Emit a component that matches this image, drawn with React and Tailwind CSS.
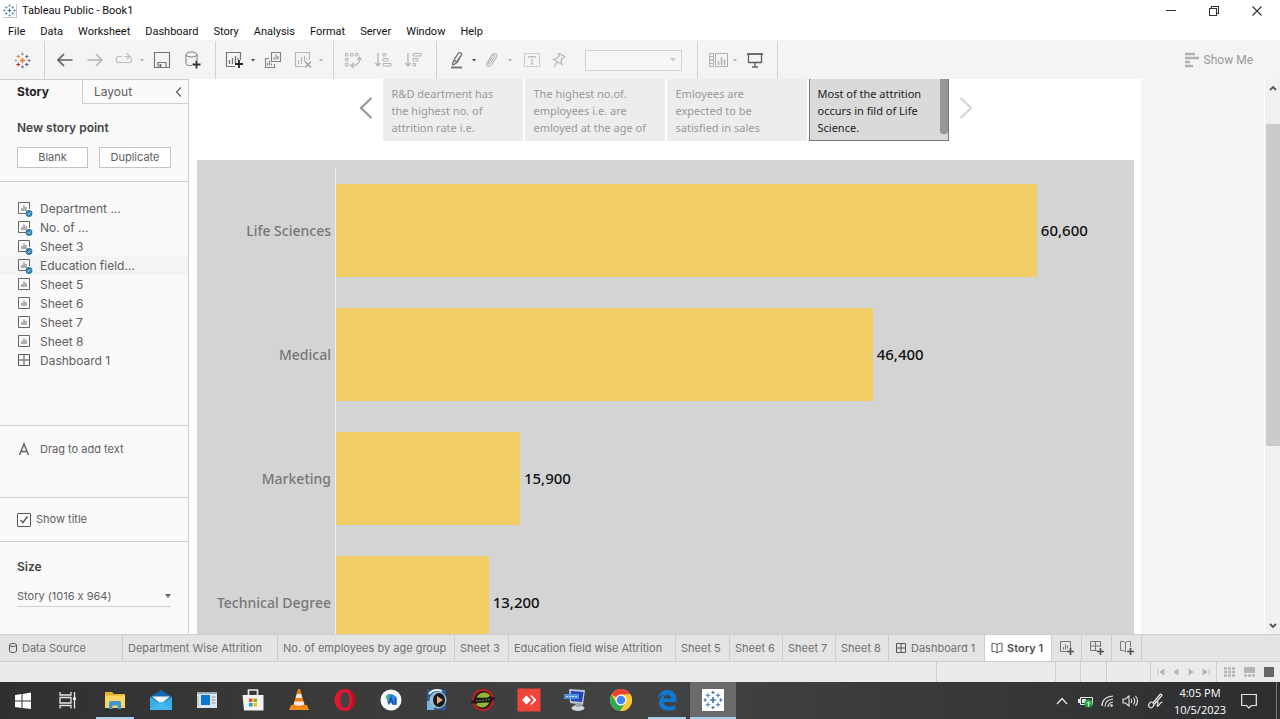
import React from "react";

const uiFont = "font-['Open_Sans','Noto_Sans',sans-serif]";
const menuFont = "font-['Roboto','Open_Sans',sans-serif]";
const bookFont = "font-['Inter','Liberation_Sans',sans-serif] [font-variant-ligatures:none]";

function Svg({ w = 18, h = 18, className = "", children }) {
  return (
    <svg width={w} height={h} viewBox={`0 0 ${w} ${h}`} fill="none" stroke="currentColor" className={`shrink-0 ${className}`} aria-hidden="true">
      {children}
    </svg>
  );
}

function Cross({ x, y, r, c, sw = 1.2 }) {
  return <path d={`M${x - r} ${y}H${x + r}M${x} ${y - r}V${y + r}`} stroke={c} strokeWidth={sw} />;
}

function TableauMark({ blue = false, size = 18 }) {
  const c = blue
    ? ["#3c7ab8", "#5d95c9", "#5d95c9", "#5d95c9", "#5d95c9", "#3f6f9f", "#3f6f9f", "#3f6f9f", "#3f6f9f"]
    : ["#e8762c", "#eb9129", "#59879b", "#c72037", "#5b6591", "#7199a6", "#5b6591", "#5b6591", "#c9a0a0"];
  return (
    <svg width={size} height={size} viewBox="0 0 18 18" fill="none" aria-hidden="true">
      <Cross x={9} y={9} r={2.6} c={c[0]} sw={1.5} />
      <Cross x={4.5} y={4.8} r={1.9} c={c[1]} />
      <Cross x={13.5} y={4.8} r={1.9} c={c[2]} />
      <Cross x={4.5} y={13.2} r={1.9} c={c[3]} />
      <Cross x={13.5} y={13.2} r={1.9} c={c[4]} />
      <Cross x={9} y={2.2} r={1.5} c={c[5]} sw={1} />
      <Cross x={9} y={15.8} r={1.5} c={c[6]} sw={1} />
      <Cross x={2} y={9} r={1.5} c={c[8]} sw={1} />
      <Cross x={16} y={9} r={1.5} c={c[7]} sw={1} />
    </svg>
  );
}

function Tool({ label, className = "w-[30px]", children }) {
  return (
    <button type="button" aria-label={label} className={`flex h-full shrink-0 items-center justify-center ${className}`}>
      {children}
    </button>
  );
}

function Caret({ dark }) {
  return (
    <button type="button" aria-label="More options" className={`flex h-full w-[8px] shrink-0 items-center justify-center ${dark ? "text-[#444]" : "text-[#b0b0b0]"}`}>
      <svg width="4" height="3" viewBox="0 0 4 3" fill="currentColor"><path d="M0 0H4L2 2.600Z" /></svg>
    </button>
  );
}

function Group({ className = "", children }) {
  return <div className={`flex shrink-0 items-center border-r border-[#d2d2d2] ${className}`}>{children}</div>;
}

function Toolbar() {
  return (
    <div className="flex h-[39px] shrink-0 items-stretch bg-[#f4f4f4] pt-px">
      <Group className="w-[45px] justify-center"><Tool label="Start page"><TableauMark size={17} /></Tool></Group>
      <Group className="w-[171px] pl-[5px]">
        <Tool label="Back"><Svg className="text-[#606060]"><path d="M16.500 9H2.500M8 3L2 9L8 15" strokeWidth="1.700" /></Svg></Tool>
        <Tool label="Forward"><Svg className="text-[#b0b0b0]"><path d="M1.500 9H15.500M10 3L16 9L10 15" strokeWidth="1.400" /></Svg></Tool>
        <Tool label="Redo" className="w-[28px]"><Svg className="text-[#bdbdbd]"><path d="M7 5.500H4A2 2 0 0 0 1.500 7.500V9.500A2 2 0 0 0 4 11.500H14A2 2 0 0 0 16.500 9.500V7.500A2 2 0 0 0 14 5.500H9.500M12 2.500L14.500 5.500L12 8.500" strokeWidth="1.200" /></Svg></Tool>
        <Caret />
        <Tool label="Save" className="w-[32px]"><Svg className="text-[#777]"><path d="M1.500 1.500H16.500V16.500H1.500ZM5 16V11.500H13V16" strokeWidth="1.200" /><path d="M6.500 13H8.500V16H6.500Z" fill="currentColor" stroke="none" /></Svg></Tool>
        <Tool label="New data source"><Svg className="text-[#777]"><ellipse cx="7.500" cy="3.500" rx="5.500" ry="2.500" /><path d="M2 3.500V12.500C2 14 5 14.800 8 14.500M13 3.500V9" /><path d="M12.500 9.500V17.500M8.500 13.500H16.500" stroke="#333" strokeWidth="1.800" /></Svg></Tool>
      </Group>
      <Group className="w-[118px] pl-[3px]">
        <Tool label="New worksheet"><Svg className="text-[#777]"><path d="M10 15.500H1.500V1.500H15.500V9" strokeWidth="1.200" /><path d="M4.500 13V9M7.500 13V7M10.500 12V5M13 9V7" strokeWidth="1.300" /><path d="M14 9V17M10 13H18" stroke="#222" strokeWidth="1.800" /></Svg></Tool>
        <Caret dark />
        <Tool label="Duplicate sheet" className="w-[32px]"><Svg className="text-[#808080]"><path d="M7.500 1.500H16.500V10.500H7.500ZM5 7.500H1.500V16.500H10.500V13M10 8.500V6.500M12 8.500V3.500M14 8.500V5M3.500 14.500V12M5.500 14.500V10M7.500 14.500V12.500" strokeWidth="1.100" /></Svg></Tool>
        <Tool label="Clear sheet" className="w-[28px]"><Svg className="text-[#b5b5b5]"><path d="M9.500 15.500H1.500V1.500H15.500V9M4.500 13V9M7.500 13V6M10.500 10.500V5M13 8.500V7" strokeWidth="1.200" /><path d="M11 10.500L17 16.500M17 10.500L11 16.500" stroke="#a0a0a0" strokeWidth="1.500" /></Svg></Tool>
        <Caret />
      </Group>
      <Group className="w-[103px] pl-1 text-[#b5b5b5]">
        <Tool label="Swap rows and columns"><Svg><path d="M1.500 2.500H4V5H1.500ZM6.500 2.500H9V5H6.500ZM11.500 2.500H14V5H11.500ZM1.500 7.500H4V10H1.500ZM1.500 12.500H4V15H1.500Z" /><path d="M15.500 7C16.500 12 12 15 7.500 14.500M10 12L7 14.500L10 17M13 9L15.500 6.500L17.500 9" strokeWidth="1.300" /></Svg></Tool>
        <Tool label="Sort ascending"><Svg><path d="M4 2V15M1.500 12L4 15L6.500 12" strokeWidth="1.300" /><path d="M9 2.500H11.500V5H9ZM9 7.500H14V10H9ZM9 12.500H17V15H9Z" /></Svg></Tool>
        <Tool label="Sort descending"><Svg><path d="M4 2V15M1.500 12L4 15L6.500 12" strokeWidth="1.300" /><path d="M9 2.500H17V5H9ZM9 7.500H14V10H9ZM9 12.500H11.500V15H9Z" /></Svg></Tool>
      </Group>
      <Group className="w-[261px] pl-[7px]">
        <Tool label="Highlight" className="w-[26px]"><Svg className="text-[#707070]"><path d="M4.500 13L6 9L10.500 2C11.500 1 14.500 2 13.500 4L9 11.500L5 14Z M6 9L9 11.500M12.500 5L9 10" strokeWidth="1.300" /><path d="M3 16.500H14" strokeWidth="1.800" /></Svg></Tool>
        <Caret dark />
        <Tool label="Group members" className="w-[28px]"><Svg className="text-[#b8b8b8]"><path d="M5 10L9 4C11 1 15 3 13.500 6L8.500 14C6.500 17 2 15 4 11.500L8.500 5C10 3 12.500 4.500 11.500 6L7 12.500C6 14 4.500 13 5.500 11.500L9.500 6" strokeWidth="1.100" /></Svg></Tool>
        <Caret />
        <Tool label="Show mark labels" className="w-[36px]"><Svg className="text-[#b8b8b8]"><path d="M1.500 2.500H16.500V15.500H1.500Z" strokeDasharray="2 1" /><path d="M5.500 7V5.500H12.500V7M9 5.500V13M7.500 13H10.500" /></Svg></Tool>
        <Tool label="Fix axes" className="w-[20px]"><Svg className="text-[#b8b8b8]"><path d="M7.500 2.500L14 5.500L12.500 7H11L10 10.500L11 13.500L2.500 8.500L5.500 7.500L8 5ZM6 11L3 16" strokeWidth="1.200" /></Svg></Tool>
        <select aria-label="Fit" disabled className="ml-[15px] h-[21px] w-[97px] shrink-0 appearance-none border border-[#d4d4d4] bg-[#f6f6f6]"><option></option></select>
        <svg width="6" height="4" viewBox="0 0 6 4" fill="#c8c8c8" className="-ml-[12px] shrink-0"><path d="M0 0H6L3 3.500Z" /></svg>
      </Group>
      <Group className="w-[80px] pl-[7px]">
        <Tool label="Show or hide cards" className="w-[26px]"><Svg w={20} className="text-[#b0b0b0]"><path d="M7.500 2.500H19.500V15.500H7.500ZM1.500 2.500H5.500V5.500H1.500ZM1.500 5.500H5.500V9H1.500ZM1.500 9H5.500V12.500H1.500ZM1.500 12.500H5.500V15.500H1.500Z" /><path d="M10.500 14V10M13.500 14V6M16.500 14V8.500" strokeWidth="1.500" /></Svg></Tool>
        <Caret />
        <Tool label="Presentation mode" className="w-[32px]"><Svg className="text-[#606060]"><path d="M1 3H17" strokeWidth="1.800" /><path d="M2.500 3V11.500H15.500V3M9 11.500V16M6 16H12" strokeWidth="1.300" /></Svg></Tool>
      </Group>
      <button type="button" className="ml-auto mr-[27px] flex items-center gap-[5px] font-['Roboto',sans-serif] text-[12px] text-[#999]">
        <Svg w={14} h={16} className="text-[#b0b0b0]"><path d="M0 2H10M0 6H14M0 10H5M0 14H8" strokeWidth="2.400" /></Svg>
        Show Me
      </button>
    </div>
  );
}

function TitleBar() {
  return (
    <header className={`shrink-0 bg-white text-[#111] ${menuFont}`}>
      <div className="flex h-[21px] items-center">
        <span className="ml-[3px] flex size-[14px] items-center justify-center border-r border-b border-[#c5c5c5]"><TableauMark blue size={13} /></span>
        <h1 className="ml-[5px] pt-[2px] text-[11px]">Tableau Public - Book1</h1>
        <div className="ml-auto mr-[2px] flex text-[#333]">
          <button type="button" aria-label="Minimize" className="flex h-5 w-[43px] items-center justify-center"><Svg w={10} h={10}><path d="M0 4.500H10" /></Svg></button>
          <button type="button" aria-label="Restore" className="flex h-5 w-[43px] items-center justify-center"><Svg w={10} h={10}><path d="M.5 2.500H7.500V9.500H.5ZM2.500 2.500V.5H9.500V7.500H7.500" strokeWidth="1.100" /></Svg></button>
          <button type="button" aria-label="Close" className="flex h-5 w-[43px] items-center justify-center"><Svg w={10} h={10}><path d="M.5 .5L9.500 9.500M9.500 .5L.5 9.500" strokeWidth="1.100" /></Svg></button>
        </div>
      </div>
      <nav className="flex h-[19px] items-center gap-px px-px pt-[3px] text-[11px]">
        {["File", "Data", "Worksheet", "Dashboard", "Story", "Analysis", "Format", "Server", "Window", "Help"].map((m) => (
          <button type="button" key={m} className="px-[7px]">{m}</button>
        ))}
      </nav>
    </header>
  );
}

function SheetIcon({ used }) {
  return (
    <Svg w={16} h={16} className="text-[#666]">
      <path d={used ? "M9 12.500H1.500V1.500H12.500V8" : "M1.500 1.500H12.500V12.500H1.500Z"} />
      <path d="M5 10V7M7 10V4.500M9 10V6" strokeWidth="1.300" stroke="#888" />
      {used && <g><circle cx="12" cy="12.500" r="3.400" fill="#2f7fa6" stroke="none" /><path d="M10.500 12.500L11.600 13.600L13.500 11.400" stroke="#cfe5ef" /></g>}
    </Svg>
  );
}

function GridIcon() {
  return <Svg w={16} h={16} className="text-[#555]"><path d="M1.500 1.500H12.500V12.500H1.500ZM7 1.500V12.500M1.500 7H12.500" /></Svg>;
}

const sheets = [
  ["Department ...", true], ["No. of ...", true], ["Sheet 3", true], ["Education field...", true],
  ["Sheet 5"], ["Sheet 6"], ["Sheet 7"], ["Sheet 8"], ["Dashboard 1"],
];

function Sidebar() {
  return (
    <aside className={`flex w-[189px] shrink-0 flex-col border-t border-r border-[#cfcfcf] bg-[#fafafa] text-[12px] text-[#606060] ${bookFont}`}>
      <div className="border-b border-[#cfcfcf] pb-[13px]">
        <div className="flex h-[24px]">
          <button type="button" className="w-[82px] pr-4 text-[12px] font-bold text-[#222]">Story</button>
          <div className="flex flex-1 items-center justify-between border-b border-l border-[#cfcfcf] pr-[6px] pl-[11px]">
            <button type="button">Layout</button>
            <button type="button" aria-label="Collapse pane"><Svg w={7} h={10}><path d="M6 .5L1.500 5L6 9.500" strokeWidth="1.300" /></Svg></button>
          </div>
        </div>
        <h2 className="mt-[16px] ml-[17px] leading-4 font-semibold text-[#444]">New story point</h2>
        <div className="mt-[11px] ml-[17px] flex gap-[11px] text-[11px]">
          <button type="button" className="h-[21px] w-[71px] border border-[#c4c4c4] bg-white">Blank</button>
          <button type="button" className="h-[21px] w-[72px] border border-[#c4c4c4] bg-white">Duplicate</button>
        </div>
      </div>
      <ul className="flex-1 border-b border-[#cfcfcf] pt-[17px]">
        {sheets.map(([name, used], i) => (
          <li key={name} className={i === 3 ? "bg-[#f4f4f4]" : ""}>
            <button type="button" className="flex h-[19px] w-full items-center gap-[7px] pl-[17px]">
              {name === "Dashboard 1" ? <GridIcon /> : <SheetIcon used={used} />}
              {name}
            </button>
          </li>
        ))}
      </ul>
      <div className="flex h-[72px] shrink-0 items-start gap-[10px] border-b border-[#cfcfcf] pt-[15px] pl-[18px] text-[11px] leading-4">
        <Svg w={12} h={16} className="text-[#666]"><path d="M1.500 14L6 3L10.500 14M3 10.500H9" strokeWidth="1.500" /></Svg>
        Drag to add text
      </div>
      <div className="flex h-[44px] shrink-0 items-center border-b border-[#cfcfcf] pl-[17px] text-[11px]">
        <label className="flex items-center">
          <input type="checkbox" defaultChecked className="peer size-[14px] appearance-none rounded-[1px] border border-[#555] bg-white" />
          <Svg w={14} h={14} className="-ml-[14px] opacity-0 peer-checked:opacity-100"><path d="M3.500 7L6 9.500L10.500 3.500" strokeWidth="1.500" /></Svg>
          <span className="ml-[5px]">Show title</span>
        </label>
      </div>
      <div className="h-[92px] shrink-0 pt-[17px] pr-[17px] pl-[17px] text-[11px]">
        <label htmlFor="size" className="block text-[12px] leading-4 font-semibold text-[#444]">Size</label>
        <div className="mt-[11px] flex h-[21px] items-center border-b border-[#cfcfcf]">
          <select id="size" className="w-full appearance-none bg-transparent"><option>Story (1016 x 964)</option></select>
          <svg width="6" height="4" viewBox="0 0 6 4" fill="#666" className="-ml-[6px] shrink-0"><path d="M0 0H6L3 4Z" /></svg>
        </div>
      </div>
    </aside>
  );
}

const points = [
  ["R&D deartment has", "the highest no. of", "attrition rate i.e."],
  ["The highest no.of.", "employees i.e. are", "emloyed at the age of"],
  ["Emloyees are", "expected to be", "satisfied in sales"],
  ["Most of the attrition", "occurs in fild of Life", "Science."],
];

const bars = [["Life Sciences", 60600], ["Medical", 46400], ["Marketing", 15900], ["Technical Degree", 13200]];
const axisMax = 69000;

function Story() {
  return (
    <main className="flex min-w-0 flex-1 flex-col overflow-hidden bg-white pr-[7px] pl-[8px] font-['Noto_Sans','Open_Sans',sans-serif]">
      <div className="flex h-[81px] shrink-0 items-start justify-center">
        <button type="button" aria-label="Previous story point" className="mt-[18px] mr-[9px] text-[#999]"><Svg w={16} h={22}><path d="M13.500 1L3 11L13.500 21" strokeWidth="2.200" /></Svg></button>
        <div className="flex gap-[2px]">
          {points.map((lines, i) => (
            <button
              type="button"
              key={i}
              className={`flex h-[62px] w-[140px] justify-between overflow-hidden text-left text-[11px] leading-[17px] ${i === 3 ? "border border-t-0 border-[#777] bg-[#dadada] pl-[8px] text-[#222]" : "bg-[#ededed] pl-[9px] text-[#999]"}`}
            >
              <span className="pt-[6px] whitespace-nowrap">{lines.map((l) => <span key={l} className="block h-[17px]">{l}</span>)}</span>
              {i === 3 && <span className="h-[55px] w-[8px] rounded-b-[3px] bg-[#979797]" />}
            </button>
          ))}
        </div>
        <button type="button" aria-label="Next story point" className="mt-[18px] ml-[9px] text-[#d4d4d4]"><Svg w={16} h={22}><path d="M2.500 1L13 11L2.500 21" strokeWidth="2.200" /></Svg></button>
      </div>
      <div className="min-h-0 flex-1 overflow-hidden bg-[#d4d4d4] pt-[8px]">
        <div className="grid h-[600px] grid-cols-[139px_1fr]">
          <div className="flex flex-col gap-[31px] border-r border-[#f0f0f0] pt-[16px] pr-[4px] text-right text-[14px] font-medium text-[#777]">
            {bars.map(([n]) => <div key={n} className="flex h-[93px] shrink-0 items-center justify-end">{n}</div>)}
          </div>
          <div className="flex flex-col gap-[31px] pt-[16px] text-[15px] font-medium text-[#111]">
            {bars.map(([n, v]) => (
              <div key={n} className="flex h-[93px] shrink-0 items-center gap-[4px]">
                <div className="h-full bg-[#f0ce63]" style={{ width: `${(v / axisMax) * 100}%` }} />
                {v.toLocaleString("en-US")}
              </div>
            ))}
          </div>
        </div>
      </div>
    </main>
  );
}

function ScrollRail() {
  return (
    <div className="flex w-[16px] shrink-0 flex-col items-center border-l border-white bg-[#f1f1f1] text-[#555]">
      <button type="button" aria-label="Scroll up" className="flex h-[17px] items-center"><Svg w={8} h={6}><path d="M1 5L4 2L7 5" strokeWidth="1.800" /></Svg></button>
      <div className="mt-[28px] h-[322px] w-[14px] bg-[#cbcbcb]" />
      <button type="button" aria-label="Scroll down" className="mt-auto flex h-[17px] items-center"><Svg w={8} h={6}><path d="M1 1L4 4L7 1" strokeWidth="1.800" /></Svg></button>
    </div>
  );
}

function BookIcon() {
  return <Svg w={12} h={12} className="text-[#555]"><path d="M6 2.500C4.500 1.500 3 1.200 1 1.500V9.500C3 9.200 4.500 9.700 6 11C7.500 9.700 9 9.200 11 9.500V1.500C9 1.200 7.500 1.500 6 2.500ZM6 2.500V11" /></Svg>;
}

function TabGrid() {
  return <Svg w={12} h={12} className="text-[#555]"><path d="M1.500 1.500H10.500V10.500H1.500ZM6 1.500V10.500M1.500 6H10.500" /></Svg>;
}

const tabs = [
  ["Data Source", "w-[123px] pl-[8px]"], ["Department Wise Attrition", "w-[155px] pl-[5px]"], ["No. of employees by age group", "w-[177px] pl-[5px]"],
  ["Sheet 3", "w-[54px] pl-[5px]"], ["Education field wise Attrition", "w-[167px] pl-[5px]"], ["Sheet 5", "w-[54px] pl-[5px]"],
  ["Sheet 6", "w-[53px] pl-[5px]"], ["Sheet 7", "w-[53px] pl-[5px]"], ["Sheet 8", "w-[53px] pl-[5px]"], ["Dashboard 1", "w-[96px] pl-[6px]"],
  ["Story 1", "w-[67px] pl-[6px]"],
];

function SheetTabs() {
  return (
    <div className={`flex h-[28px] shrink-0 border-t border-b border-[#cdcdcd] bg-[#e4e4e4] text-[11px] text-[#707070] ${bookFont}`}>
      {tabs.map(([t, w]) => (
        <button type="button" key={t} className={`flex shrink-0 items-center gap-[4px] border-r border-[#cdcdcd] whitespace-nowrap ${w} ${t === "Story 1" ? "bg-white font-semibold text-[#505050]" : ""}`}>
          {t === "Data Source" && <Svg w={10} h={12} className="text-[#555]"><path d="M1.500 3C1.500 1 8.500 1 8.500 3V9C8.500 11 1.500 11 1.500 9ZM1.500 3C1.500 5 8.500 5 8.500 3" /></Svg>}
          {t === "Dashboard 1" && <TabGrid />}
          {t === "Story 1" && <BookIcon />}
          {t}
        </button>
      ))}
      {["New worksheet", "New dashboard", "New story"].map((n, i) => (
        <button type="button" aria-label={n} key={n} className="flex w-[30px] shrink-0 items-center justify-center border-r border-[#cdcdcd]">
          <Svg w={16} h={16} className="text-[#777]">
            {i === 0 && <path d="M8 11.500H1.500V1.500H11.500V8M4.500 9.500V7M6.500 9.500V4.500M8.500 8.500V5.500" />}
            {i === 1 && <path d="M8 10.500H1.500V1.500H11.500V7M6.500 1.500V10.500M1.500 6H11.500" />}
            {i === 2 && <path d="M6.500 2.500C5 1.500 3.500 1.200 1.500 1.500V10.500C3.500 10.200 5 10.500 6.500 12M6.500 2.500C8 1.500 9.500 1.200 11.500 1.500V7M6.500 2.500V12" />}
            <path d="M11.500 8V15M8 11.500H15" strokeWidth="1.700" stroke="#505050" />
          </Svg>
        </button>
      ))}
    </div>
  );
}

function StatusBar() {
  return (
    <div className="flex h-[20px] shrink-0 items-stretch justify-end bg-[#ebebeb] text-[#b5b5b5]">
      <div className="w-[119px] border-l border-[#cfcfcf]" />
      <div className="w-[25px] border-l border-[#cfcfcf]" />
      <div className="w-[26px] border-l border-[#cfcfcf]" />
      <div className="w-[44px] border-l border-[#cfcfcf]" />
      <div className="flex w-[66px] items-center justify-center gap-[7px] border-l border-[#cfcfcf]">
        {["M1 1V7M7 1L3 4L7 7Z", "M6 1L2 4L6 7Z", "M2 1L6 4L2 7Z", "M7 1V7M1 1L5 4L1 7Z"].map((d) => (
          <button type="button" aria-label="Sheet navigation" key={d}><Svg w={8} h={8}><path d={d} fill="currentColor" strokeWidth=".8" /></Svg></button>
        ))}
      </div>
      <div className="flex w-[64px] items-center justify-center gap-[9px] border-l border-[#cfcfcf]">
        <button type="button" aria-label="Sheet sorter"><Svg w={11} h={10}><path d="M0 1.500H11M0 5H11M0 8.500H11" strokeWidth="2.400" strokeDasharray="3 1" /></Svg></button>
        <button type="button" aria-label="Filmstrip"><Svg w={11} h={10}><path d="M0 3H11" strokeWidth="6" /><path d="M0 8.500H11" strokeWidth="2.400" strokeDasharray="3 1" /></Svg></button>
        <button type="button" aria-label="Show tabs" className="size-[10px] bg-[#666]" />
      </div>
    </div>
  );
}

const apps = [
  ["Start", <path d="M4 7L10.500 6V12.500H4ZM11.500 6L20 4.500V12.500H11.500ZM4 13.500H10.500V20L4 19ZM11.500 13.500H20V21L11.500 20Z" fill="#fff" />],
  ["Task View", <g stroke="#e6e6e6" fill="none" strokeWidth="1.300"><path d="M3 4V7H14V4M3 20.500V17.500H14V20.500M3 9.500H14V15H3ZM17.500 4V20.500" /><path d="M16 9.500H19V12H16Z" fill="#e6e6e6" stroke="none" /></g>],
  ["File Explorer", <g><path d="M2 4H9L11 6H22V20H2Z" fill="#e8b02f" /><path d="M2 7.500H22V20H2Z" fill="#fbd565" /><path d="M6 21V14.500Q6 13 8 13H16Q18 13 18 14.500V21H14.500V17.500H9.500V21Z" fill="#4094d0" /></g>],
  ["Mail", <g><path d="M1 9L12 2L23 9V12H1Z" fill="#1268b3" /><path d="M3 8.500H21L12 16Z" fill="#f4f8fb" /><path d="M1 9L12 15.500L1 22ZM23 9L12 15.500L23 22Z" fill="#33aee8" /><path d="M1 22V21L12 13.500L23 21V22Z" fill="#45b8ed" /></g>],
  ["Reader", <g><path d="M2 4H22V20H2Z" fill="#dfe6ec" /><path d="M2 4H22V6H2Z" fill="#9daab5" /><path d="M6 7H15V17H6Z" fill="#0878d4" /><path d="M16.500 9H20.500M16.500 12H20.500M16.500 15H20.500" stroke="#8898a5" /><path d="M3 8V18" stroke="#a9b5be" /></g>],
  ["Microsoft Store", <g><path d="M7.500 7V2H16.500V7" fill="none" stroke="#e9e9e9" strokeWidth="1.700" /><path d="M1.500 7H22.500V22.500H3Z" fill="#f2f2f2" /><path d="M8 10.500H11.500V14H8Z" fill="#f25022" /><path d="M12.500 10.500H16V14H12.500Z" fill="#7fba00" /><path d="M8 15H11.500V18.500H8Z" fill="#00a4ef" /><path d="M12.500 15H16V18.500H12.500Z" fill="#ffb900" /></g>],
  ["VLC", <g><path d="M4 17H20L22 22H2Z" fill="#f48b12" /><path d="M11 1H13L18 18Q12 21 6 18Z" fill="#f57f0b" /><path d="M9.800 6H14.200L15.300 10H8.700ZM7.500 13.500H16.500L17.300 16.500Q12 19 6.700 16.500Z" fill="#eee" /></g>],
  ["Opera", <g><ellipse cx="12" cy="12" rx="10.500" ry="11" fill="#e5162d" /><path d="M15 1.500Q23 4 22.500 12Q23 20 15 22.500Q19 18 19 12T15 1.500Z" fill="#a70e20" opacity=".7" /><ellipse cx="12" cy="12" rx="4.700" ry="8" fill="#424242" /></g>],
  ["Android Studio", <g><circle cx="12" cy="12" r="10.500" fill="#f8f8f8" /><path d="M7 8Q10 5 14 6.500L17.500 9V17H14L12 15L9 15.500Z" fill="#2f83ec" /><path d="M6.500 9Q8 5.500 11 6L9 13Z" fill="#3bc17e" /><path d="M9.500 16.500L12 10L14.500 16.500M16.700 10V16.500" stroke="#164f94" strokeWidth="1.400" fill="none" /></g>],
  ["Media Player", <g><path d="M2 1.500H21V22H2Z" fill="#315a93" /><path d="M2 13H9V22H2Z" fill="#70b6dd" /><circle cx="13" cy="12" r="8.500" fill="#9dbdd2" /><ellipse cx="14" cy="12" rx="6" ry="7" fill="#17191e" /><path d="M12 8L18 12L12 16Z" fill="#e3ad75" /><path d="M4 6Q9 0 17 3" stroke="#e4f3fc" strokeWidth="2" fill="none" /></g>],
  ["Game Booster", <g><circle cx="12" cy="12" r="10" fill="#142015" stroke="#c71924" strokeWidth="2.200" /><path d="M5.500 9.500Q11 1 19 7L17 10Z" fill="#91b733" /><path d="M18.500 14.500Q13 23 5 17L7 14Z" fill="#91b733" /><path d="M0 13.500L5 10.500L24 9V11L19 14L0 15.500Z" fill="#171717" /><path d="M5 13L19 11.500" stroke="#7f9150" strokeDasharray="2 1" /></g>],
  ["AnyDesk", <g><path d="M.5 .5H23.500V23.500H.5Z" fill="#ef443b" /><path d="M5 12L9.500 7.500L14 12L9.500 16.500Z" fill="#fff" /><path d="M13 7.500H15L19.500 12L15 16.500H13L17 12Z" fill="#fff" /></g>],
  ["Remote Desktop", <g><path d="M6 1L22 2L20 17L7 15Z" fill="#b8c5d4" /><path d="M8 3L20.500 4L19 14L8 13Z" fill="#2542b8" /><path d="M1 6H16V11H1Z" fill="#4d94df" /><path d="M3 8.500H14" stroke="#d2e7fb" strokeDasharray="2 1" /><ellipse cx="15" cy="20" rx="6.500" ry="3" fill="#cdd4da" /><path d="M12 15H18L17 19H13Z" fill="#9ca8b2" /></g>],
  ["Chrome", <g><circle cx="12" cy="12" r="11" fill="#fcc934" /><path d="M12 12L2.500 6.500A11 11 0 0 1 21.500 6.500H12Z" fill="#ea4335" /><path d="M2.500 6.500A11 11 0 0 0 11 23L16.800 14.700L12 12L7.300 14.700Z" fill="#34a853" /><path d="M12 6.500H21.500A11 11 0 0 1 11 23L16.800 14.700Z" fill="#fcc934" /><circle cx="12" cy="12" r="5.500" fill="#fff" /><circle cx="12" cy="12" r="4.300" fill="#4285f4" /></g>],
  ["Edge", <path d="M3 10.500C4 4.500 7.500 2 12 2C18 2 21.500 6 21.500 11V14H8.500C8.800 17 11.500 18.500 14.500 18.500C16.700 18.500 18.600 18 20.300 17V21C18.400 22 16 22.500 13.500 22.500C7.500 22.500 4 19 4 14.500C4 11 6 8.500 9 7C6 7.500 4.200 8.800 3 10.500ZM8.700 10.500H16C16 8 14.700 6.800 12.600 6.800S8.900 8.200 8.700 10.500Z" fill="#0f78d0" fillRule="evenodd" />],
  ["Tableau", null],
];

function Taskbar() {
  return (
    <footer className={`flex h-[37px] shrink-0 bg-linear-to-r from-[#303030] via-[#434343] to-[#2c2e30] text-white ${uiFont}`}>
      {apps.map(([name, art], i) => (
        <button type="button" aria-label={name} key={name} className={`flex w-[46px] shrink-0 flex-col items-center pt-[6px] ${i === 15 ? "bg-[#6a6a6a]" : ""}`}>
          {art ? <svg width="24" height="24" viewBox="0 0 24 24">{art}</svg> : <span className="mt-px flex size-[22px] items-center justify-center bg-white"><TableauMark blue size={20} /></span>}
          {(i === 2 || i >= 14) && <span className={`mt-auto h-[2px] bg-[#9cd3f3] ${i === 15 ? "w-full" : "w-[38px]"}`} />}
        </button>
      ))}
      <div className="ml-auto flex items-center text-[#e8e8e8]">
        <button type="button" aria-label="Show hidden icons" className="w-[22px]"><Svg w={12} h={8}><path d="M1 7L6 1.500L11 7" strokeWidth="1.300" /></Svg></button>
        <button type="button" aria-label="Battery" className="w-[23px]"><Svg w={17} h={14}><path d="M2.500 3.500H14.500V10.500H2.500Z" /><path d="M4 5H8V9H4ZM0 5H2V9H0Z" fill="currentColor" stroke="none" /><circle cx="10.500" cy="9.500" r="4" fill="#22a447" stroke="none" /><path d="M10.500 12.500V8.500M8.800 9.500L10.500 7.700L12.200 9.500" stroke="#d8f4df" /></Svg></button>
        <button type="button" aria-label="Wireless" className="w-[21px]"><Svg w={14} h={14}><path d="M1 12Q1 3 12 2M4 12.500Q4 6 12 5M7 13Q7 9 12 8" strokeWidth="1.200" /><circle cx="10.500" cy="11.500" r="1.300" fill="currentColor" stroke="none" /></Svg></button>
        <button type="button" aria-label="Volume" className="w-[26px]"><Svg w={17} h={14}><path d="M1 5H3.500L7 2V12L3.500 9H1ZM9 5Q10.500 7 9 9M11.500 3.500Q14 7 11.500 10.500M13.500 2Q17.500 7 13.500 12" strokeWidth="1.100" /></Svg></button>
        <button type="button" aria-label="Pen" className="w-[27px]"><Svg w={16} h={16}><path d="M5 10L12 1.500C13 .5 14.500 2 13.500 3L6 11.500ZM1 11C-.5 14.500 3.500 16 5 13.500C7 10 9 8 10 9S7.500 14 10 13C12 12 12 9 14.500 9M1 11C2 9 3.500 8.500 5 9.500" strokeWidth="1.200" /></Svg></button>
        <time className="flex w-[50px] flex-col items-center text-[11px] leading-[17px] whitespace-nowrap text-white"><span>4:05 PM</span><span>10/5/2023</span></time>
        <button type="button" aria-label="Notifications" className="ml-[16px] w-[35px]"><Svg w={16} h={16}><path d="M.7 1.500H15.300V12.500H10.500L8 15L5.500 12.500H.7Z" strokeWidth="1.200" /></Svg></button>
        <div className="h-full w-[4px] border-l border-[#777]" />
      </div>
    </footer>
  );
}

export default function App() {
  return (
    <div className="flex h-screen min-h-[560px] flex-col overflow-hidden bg-white">
      <TitleBar />
      <Toolbar />
      <div className="flex min-h-0 flex-1">
        <Sidebar />
        <Story />
        <div className="w-[123px] shrink-0 bg-[#f5f5f5]" />
        <ScrollRail />
      </div>
      <SheetTabs />
      <StatusBar />
      <Taskbar />
    </div>
  );
}
